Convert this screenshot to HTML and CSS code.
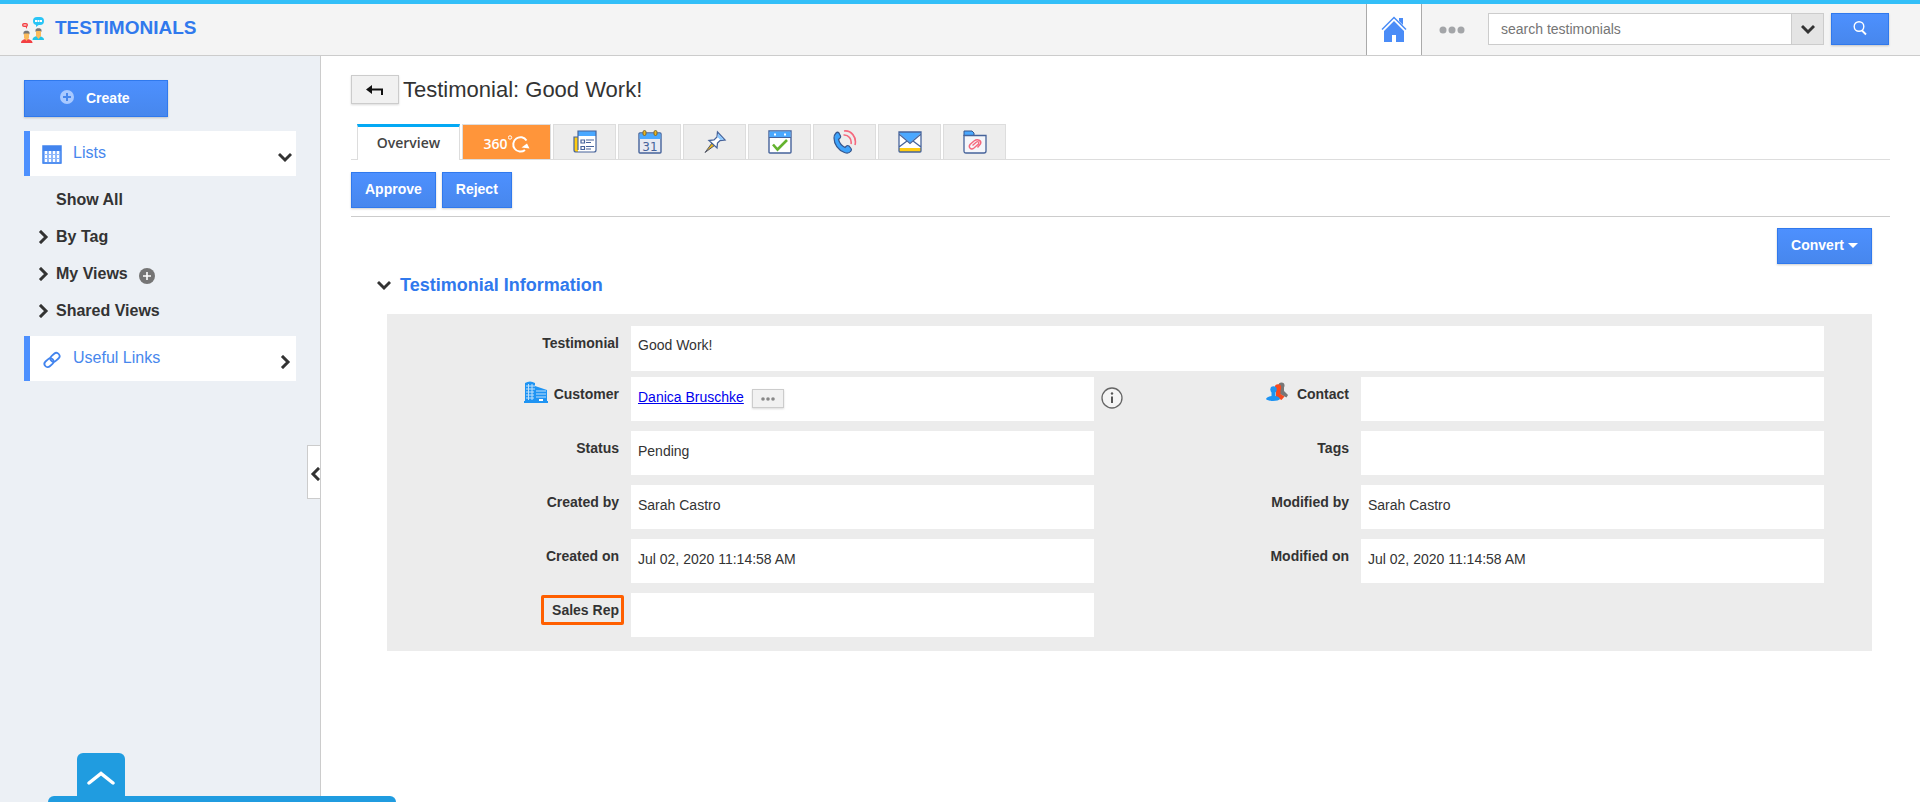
FILE: index.html
```html
<!DOCTYPE html>
<html lang="en">
<head>
<meta charset="utf-8">
<title>Testimonials</title>
<meta name="viewport" content="width=device-width, initial-scale=1">
<link rel="stylesheet" href="styles.css">
</head>
<body>
<svg class="defs" aria-hidden="true">
  <symbol id="chevron" viewBox="0 0 14 14"><path d="M2 5l5 5 5-5" fill="none" stroke="#333" stroke-width="3" stroke-linecap="square"/></symbol>
</svg>

<header class="topbar">
  <div class="brand">
    <svg class="brand-icon" viewBox="0 0 24 28" aria-hidden="true">
      <rect x="12" y="1" width="11" height="8" rx="4" fill="#29c5f6"/>
      <path d="M15 8l0 3 4-3z" fill="#29c5f6"/>
      <path d="M14 5h7" stroke="#fff" stroke-width="2" stroke-dasharray="2 .5"/>
      <rect x="1" y="7" width="6" height="4" rx="2" fill="#f33f43"/>
      <path d="M4 10l2 3v-3z" fill="#f33f43"/>
      <path d="M2.500 9h3" stroke="#fff"/>
      <path d="M11.500 24c0-3 3-4 5.500-4s6 1 6 4z" fill="#22c4e8"/>
      <path d="M15 15h5v5l-2.500 3-2.500-3z" fill="#fbbb5c"/>
      <path d="M14.500 16v-2c0-2.500 6-2.500 6 0v2l-1-1h-4z" fill="#777"/>
      <path d="M0 27c0-3 3-4 5.500-4s6 1 6 4z" fill="#f33f43"/>
      <path d="M3 17h5v5l-2.500 3-2.500-3z" fill="#fbbb5c"/>
      <path d="M2.500 18.500v-2c0-2.500 6-2.500 6 0v2l-1-1h-4z" fill="#777"/>
    </svg>
    <h1 class="brand-name">TESTIMONIALS</h1>
  </div>
  <a class="home" href="#" aria-label="Home">
    <svg class="home-icon" viewBox="0 0 26 26" aria-hidden="true">
      <path d="M1 13.500L13 1.500l12 12" fill="none" stroke="#4a8cf7" stroke-width="1.500"/>
      <path d="M18 2h4v7l-4-4z" fill="#4a8cf7"/>
      <path d="M13 5l10 10v11h-8v-7h-4v7H3V15z" fill="#4a8cf7"/>
    </svg>
  </a>
  <button class="more" type="button" aria-label="More">
    <svg class="more-icon" viewBox="0 0 26 8" aria-hidden="true"><g fill="#a3a5a8"><circle cx="4" cy="4" r="3.500"/><circle cx="13" cy="4" r="3.500"/><circle cx="22" cy="4" r="3.500"/></g></svg>
  </button>
  <form class="search">
    <input class="search-input" type="text" aria-label="Search testimonials" placeholder="search testimonials">
    <button class="search-options" type="button" aria-label="Search options"><svg class="chev" aria-hidden="true"><use href="#chevron"/></svg></button>
    <button class="btn search-go" type="button" aria-label="Search">
      <svg class="glass" viewBox="0 0 16 16" aria-hidden="true"><circle cx="7" cy="6.500" r="4.800" fill="none" stroke="#fff" stroke-width="1.400"/><path d="M10 10.500l4 4" stroke="#fff" stroke-width="1.800"/></svg>
    </button>
  </form>
</header>

<div class="layout">
  <nav class="sidebar">
    <button class="btn create" type="button">
      <svg class="create-icon" viewBox="0 0 14 14" aria-hidden="true"><circle cx="7" cy="7" r="7" fill="#a9c9ff"/><path d="M7 3v8M3 7h8" stroke="#4787ed" stroke-width="2"/></svg>
      Create
    </button>
    <a class="nav-head" href="#">
      <svg class="nav-icon" viewBox="0 0 20 20" aria-hidden="true"><path d="M1 1h18v18H1z" fill="#8fb8fb"/><path d="M1 1h18v5H1z" fill="#4284ee"/><path fill="#fff" d="M3 6h2v3H3zM7 6h2v3H7zM11 6h2v3h-2zM15 6h2v3h-2zM3 10h2v3H3zM7 10h2v3H7zM11 10h2v3h-2zM15 10h2v3h-2zM3 14h2v3H3zM7 14h2v3H7zM11 14h2v3h-2zM15 14h2v3h-2z"/><path d="M1 1h18v17H1z" fill="none" stroke="#4284ee" stroke-width="1.500"/></svg>
      <span class="nav-title">Lists</span>
      <svg class="chev" aria-hidden="true"><use href="#chevron"/></svg>
    </a>
    <ul class="nav-list">
      <li class="nav-item"><span class="nav-gap"></span><a href="#">Show All</a></li>
      <li class="nav-item"><svg class="chev right" aria-hidden="true"><use href="#chevron"/></svg><a href="#">By Tag</a></li>
      <li class="nav-item"><svg class="chev right" aria-hidden="true"><use href="#chevron"/></svg><a href="#">My Views</a>
        <button class="add" type="button" aria-label="Add view"><svg class="add-icon" viewBox="0 0 16 16" aria-hidden="true"><circle cx="8" cy="8" r="8" fill="#757575"/><path d="M8 4v8M4 8h8" stroke="#fff" stroke-width="1.600"/></svg></button></li>
      <li class="nav-item"><svg class="chev right" aria-hidden="true"><use href="#chevron"/></svg><a href="#">Shared Views</a></li>
    </ul>
    <a class="nav-head" href="#">
      <svg class="nav-icon" viewBox="0 0 20 20" aria-hidden="true"><g transform="rotate(-42 10 10)" fill="none" stroke="#4284ee" stroke-width="1.800"><rect x="1" y="6.800" width="10" height="6.400" rx="3.200"/><rect x="9" y="6.800" width="10" height="6.400" rx="3.200"/></g></svg>
      <span class="nav-title">Useful Links</span>
      <svg class="chev right" aria-hidden="true"><use href="#chevron"/></svg>
    </a>
    <button class="collapse" type="button" aria-label="Collapse sidebar"><svg class="chev left" aria-hidden="true"><use href="#chevron"/></svg></button>
  </nav>

  <main class="content">
    <div class="title-row">
      <button class="back" type="button" aria-label="Back"><svg class="back-icon" viewBox="0 0 18 12" aria-hidden="true"><path d="M0 5.500L6 1v9z" fill="#111"/><path d="M4 5.500h12V11" fill="none" stroke="#111" stroke-width="2"/></svg></button>
      <h2 class="title">Testimonial: Good Work!</h2>
    </div>

    <div class="tabs">
      <button class="tab active" type="button">Overview</button>
      <button class="tab full" type="button">360<svg class="turn" viewBox="0 0 22 20" aria-hidden="true"><g fill="none" stroke="#fff"><circle cx="2" cy="3.500" r="1.700"/><path d="M18.500 6.500a7.200 7.200 0 1 0-1.500 9.500" stroke-width="2"/></g><path d="M13.500 13.500l5.500-4 2.500 5z" fill="#fff"/></svg></button>
      <button class="tab" type="button" aria-label="News"><svg class="tab-icon" viewBox="0 0 24 24"><path d="M1 7h5v15H3q-2 0-2-2z" fill="#fc1"/><path d="M5 1h18v19q0 2-2 2H5z" fill="#fff"/><path d="M5 1h18v5H5z" fill="#4aa8ff"/><path d="M5 7H1v13q0 2 2 2h18q2 0 2-2V1H5v19M8 10h3.500v3H8zM8 16.500h3.500v3H8zM13 10h8M13 12.500h5M13 16.500h8M13 19h5" fill="none" stroke="#46639a" stroke-width="1.200"/></svg></button>
      <button class="tab" type="button" aria-label="Calendar"><svg class="tab-icon" viewBox="0 0 24 24"><rect x="1" y="3" width="22" height="20" rx="1" fill="#e8eaf2" stroke="#46639a" stroke-width="1.400"/><path d="M1.500 3.500h21V9h-21z" fill="#4aa8ff"/><rect x="5" y="0.500" width="3" height="5" rx="1.500" fill="#eab41b" stroke="#7d6930"/><rect x="16" y="0.500" width="3" height="5" rx="1.500" fill="#eab41b" stroke="#7d6930"/><text class="day" x="12" y="21">31</text></svg></button>
      <button class="tab" type="button" aria-label="Pin"><svg class="tab-icon" viewBox="0 0 24 24"><path d="M9 13l2.500 2.500L2 22.500z" fill="#eab41b" stroke="#52586b"/><path d="M14.500 2l7.500 8-5 .5-2.500 2.500-.5 5-8-7.500 5-.5 3-3z" fill="#fff" stroke="#46639a" stroke-width="1.300"/><path d="M15 3.500l6 6-3.500.5L14.500 7z" fill="#8cc8ff"/></svg></button>
      <button class="tab" type="button" aria-label="Tasks"><svg class="tab-icon" viewBox="0 0 24 24"><path d="M1 1h22v21q0 1-1 1H2q-1 0-1-1z" fill="#fff" stroke="#46639a" stroke-width="1.400"/><path d="M1.500 1.500h21V7h-21z" fill="#4aa8ff"/><path d="M1 7.500h22" stroke="#46639a"/><path d="M6 4.500h2M16 4.500h2" stroke="#fff" stroke-width="2"/><path d="M5 14.500l4.500 5L19 10" fill="none" stroke="#64b32f" stroke-width="2.600"/></svg></button>
      <button class="tab" type="button" aria-label="Calls"><svg class="tab-icon" viewBox="0 0 24 24"><path d="M3 3q1.500-1.500 3 0l1.500 3q.5 1.500-1 2.500L5.500 9.500q1.500 5.500 6.500 8l1.500-1.500q1-1 2.500 0l2 2.500q1 1.500-.5 3-2 2.500-6 1C5 20 1 14 1 8q0-3 2-5z" fill="#3da3fb" stroke="#36578e" stroke-width="1.200"/><path d="M11 1c7-1 13 6 11 14M10.500 5c5-.5 8.500 4 7.500 9" fill="none" stroke="#f5687d" stroke-width="1.600"/></svg></button>
      <button class="tab" type="button" aria-label="Mail"><svg class="tab-icon" viewBox="0 0 24 24"><path d="M1 2h22v19q0 1-1 1H2q-1 0-1-1z" fill="#fff"/><path d="M1 18h22v4H1z" fill="#fc1"/><path d="M1 2h22v1L12 13 1 3z" fill="#4aa8ff"/><path d="M1 2h22v19q0 1-1 1H2q-1 0-1-1zM1 4l11 9.500L23 4M1 17l8-6M23 17l-8-6" fill="none" stroke="#46639a" stroke-width="1.300"/></svg></button>
      <button class="tab" type="button" aria-label="Files"><svg class="tab-icon" viewBox="0 0 24 24"><path d="M1 6V1h8l2 2v3z" fill="#4aa8ff" stroke="#36578e"/><path d="M1 5.500h22V21q0 2-2 2H3q-2 0-2-2z" fill="#f5f6fa" stroke="#46639a" stroke-width="1.300"/><path d="M9.500 15.500l4-3.500c1.500-1 3 .5 2 2L11 18c-3 2.500-6-.5-4-3.500l4-3.500c3.500-2.500 8-.5 6.500 3l-3 3.500" fill="none" stroke="#f5687d" stroke-width="1.400"/></svg></button>
    </div>

    <div class="actions">
      <button class="btn" type="button">Approve</button>
      <button class="btn" type="button">Reject</button>
    </div>

    <div class="convert-row">
      <button class="btn convert" type="button">Convert <span class="caret"></span></button>
    </div>

    <section class="info">
      <h3 class="section-title"><svg class="chev" aria-hidden="true"><use href="#chevron"/></svg>Testimonial Information</h3>
      <div class="panel">
        <div class="fields first">
          <div class="label">Testimonial</div>
          <div class="value wide">Good Work!</div>
        </div>
        <div class="fields">
          <div class="label">
            <svg class="label-icon" viewBox="0 0 24 22" aria-hidden="true"><path d="M1 2q5-3 10 0v18H1zM11 5l12 4v11H11z" fill="#1f94f3"/><path d="M2 5h9M2 8h9M2 11h8M2 14h8M2 17h8M4.500 3v16M8 3v16M12 10h10M12 13h10M12 16h10" stroke="#bfe0fb"/><path d="M0 21h24" stroke="#1f94f3" stroke-width="2"/><path d="M15 18h4v2h-4z" fill="#fff"/></svg>
            Customer
          </div>
          <div class="value"><a class="link" href="#">Danica Bruschke</a><button class="mini" type="button" aria-label="Customer options"><svg class="mini-icon" viewBox="0 0 14 4" aria-hidden="true"><g fill="#888"><circle cx="2" cy="2" r="1.800"/><circle cx="7" cy="2" r="1.800"/><circle cx="12" cy="2" r="1.800"/></g></svg></button></div>
          <div class="label with-info">
            <svg class="info-icon" viewBox="0 0 22 22" aria-hidden="true"><circle cx="11" cy="11" r="10" fill="#f4f4f4" stroke="#666" stroke-width="1.300"/><path d="M11 9.500V16" stroke="#555" stroke-width="2"/><circle cx="11" cy="6.500" r="1.200" fill="#555"/></svg>
            <svg class="label-icon people" viewBox="0 0 22 20" aria-hidden="true"><circle cx="15.500" cy="3.500" r="3" fill="#777"/><path d="M14 5h4v4l4 4-1.500 2.500L14 12z" fill="#777"/><circle cx="12" cy="5.500" r="3.200" fill="#f8491e"/><path d="M10 7h4.500v5l4 2.500-3 3.500-5.500-3z" fill="#f8491e"/><circle cx="7.500" cy="7.500" r="3.200" fill="#1f94f3"/><path d="M5.500 9h4v5c3 .5 4 1.500 4.500 3-1 2.500-13 2.500-14 0 .5-1.500 2-2.500 5.500-3z" fill="#1f94f3"/></svg>
            Contact
          </div>
          <div class="value"></div>

          <div class="label">Status</div><div class="value">Pending</div>
          <div class="label">Tags</div><div class="value"></div>

          <div class="label">Created by</div><div class="value">Sarah Castro</div>
          <div class="label">Modified by</div><div class="value">Sarah Castro</div>

          <div class="label">Created on</div><div class="value">Jul 02, 2020 11:14:58 AM</div>
          <div class="label">Modified on</div><div class="value">Jul 02, 2020 11:14:58 AM</div>

          <div class="label marked"><span class="mark">Sales Rep</span></div><div class="value"></div>
        </div>
      </div>
    </section>
  </main>
</div>

<div class="dock">
  <button class="dock-tab" type="button" aria-label="Open dock"><svg class="dock-icon" viewBox="0 0 28 14" aria-hidden="true"><path d="M2 12L14 2.500 26 12" fill="none" stroke="#fff" stroke-width="3.500" stroke-linecap="round"/></svg></button>
  <div class="dock-bar"></div>
</div>
</body>
</html>
```
FILE: styles.css
```css
* { box-sizing: border-box; }

body {
  margin: 0;
  min-height: 100vh;
  display: flex;
  flex-direction: column;
  font: 14px/18px "Liberation Sans", Arial, sans-serif;
  color: #333;
  background: #fff;
}

button, input { font: inherit; margin: 0; }
button { cursor: pointer; }
a { color: inherit; text-decoration: none; }
h1, h2, h3 { margin: 0; }
svg { display: block; flex: none; }

.defs { position: absolute; width: 0; height: 0; }

.chev { width: 14px; height: 14px; }
.chev.right { transform: rotate(-90deg); }
.chev.left { transform: rotate(90deg); }

.btn {
  height: 36px;
  padding: 0 13px 2px;
  border: 1px solid #3079ed;
  background: linear-gradient(#4d90fe, #4787ed);
  box-shadow: 0 1px 2px rgba(0, 0, 0, .2);
  color: #fff;
  font-weight: bold;
}

/* Header */
.topbar {
  display: flex;
  align-items: center;
  height: 56px;
  padding-right: 31px;
  border-top: 4px solid #33bff8;
  border-bottom: 1px solid #ccc;
  background: #f4f4f4;
}
.brand { display: flex; flex: 1; align-items: center; gap: 10px; padding-left: 21px; }
.brand-icon { width: 24px; height: 28px; }
.brand-name { font-size: 19px; line-height: 24px; padding-bottom: 4px; color: #3079ed; }
.home {
  align-self: stretch;
  display: flex;
  justify-content: center;
  width: 56px;
  padding-top: 12px;
  border: solid #aaa;
  border-width: 0 1px;
  background: #fff;
}
.home-icon { width: 26px; height: 26px; }
.more { padding: 0 23px 0 17px; border: 0; background: none; }
.more-icon { width: 26px; height: 8px; }
.search { display: flex; padding-bottom: 2px; }
.search-input {
  width: 303px;
  height: 32px;
  padding: 0 12px;
  border: 1px solid #ccc;
  border-right: 0;
  background: #fff;
}
.search-input::placeholder { color: #757575; }
.search-options {
  display: grid;
  place-items: center;
  width: 33px;
  height: 32px;
  padding: 0;
  border: 1px solid #ccc;
  background: #e4e4e4;
}
.search-go { display: grid; place-items: center; width: 58px; height: 32px; margin-left: 7px; padding: 0 0 2px; }
.glass { width: 16px; height: 16px; }

/* Sidebar */
.layout { display: flex; flex: 1; }
.sidebar {
  position: relative;
  flex: none;
  width: 321px;
  padding: 24px 24px 0;
  border-right: 1px solid #ccc;
  background: #ecf0f5;
}
.create { display: flex; align-items: center; gap: 12px; width: 144px; height: 37px; margin-bottom: 14px; padding: 0 0 2px 35px; }
.create-icon { width: 14px; height: 14px; margin-bottom: 2px; }
.nav-head {
  display: flex;
  align-items: center;
  height: 45px;
  padding: 0 4px 0 12px;
  border-left: 6px solid #4d90fe;
  background: #fff;
  color: #4787ed;
}
.nav-icon { width: 20px; height: 20px; margin-top: 2px; }
.nav-title { flex: 1; padding: 0 0 2px 11px; font-size: 16px; }
.nav-head .chev { margin-top: 6px; }
.nav-list { margin: 0; padding: 5px 0 7px; list-style: none; }
.nav-item {
  display: flex;
  align-items: center;
  height: 37px;
  padding-left: 12px;
  font-size: 16px;
  font-weight: bold;
}
.nav-item a { padding-left: 6px; }
.nav-gap { width: 14px; }
.add { margin: 4px 0 0 11px; padding: 0; border: 0; background: none; }
.add-icon { width: 16px; height: 16px; }
.collapse {
  position: absolute;
  top: 389px;
  right: 0;
  display: flex;
  align-items: center;
  width: 13px;
  height: 54px;
  padding: 4px 0 0 1px;
  overflow: hidden;
  border: 1px solid #ccc;
  border-right: 0;
  background: #fff;
}

/* Main */
.content { flex: 1; min-width: 0; padding: 19px 30px 0; }
.title-row { display: flex; align-items: center; gap: 4px; }
.back {
  display: grid;
  place-items: center;
  width: 48px;
  height: 29px;
  padding: 0;
  border: 1px solid #ccc;
  background: #f1f1f1;
  box-shadow: 0 1px 2px rgba(0, 0, 0, .15);
}
.back-icon { width: 18px; height: 12px; }
.title { font-size: 22px; line-height: 29px; font-weight: normal; }

.tabs { display: flex; gap: 2px; margin-top: 20px; padding-left: 6px; border-bottom: 1px solid #ddd; }
.tab {
  display: flex;
  align-items: center;
  justify-content: center;
  width: 63px;
  height: 35px;
  padding: 0;
  border: 1px solid #ddd;
  border-bottom: 0;
  background: #ededed;
}
.tab.active {
  width: 103px;
  height: 36px;
  margin-bottom: -1px;
  padding-bottom: 2px;
  border-top: 3px solid #03a9f4;
  background: #fff;
  color: #444;
  font: 600 14px/18px "Open Sans", sans-serif;
}
.tab.full {
  width: 89px;
  padding-top: 4px;
  background: #ff953a;
  color: #fff;
  font: 600 14px/18px "Open Sans", sans-serif;
}
.turn { width: 22px; height: 20px; }
.tab-icon { width: 24px; height: 24px; }
.day { font: 12px "DejaVu Sans", sans-serif; fill: #46639a; text-anchor: middle; }

.actions { display: flex; gap: 6px; padding: 12px 0 8px; border-bottom: 1px solid #ccc; }
.convert-row { display: flex; justify-content: flex-end; padding: 11px 18px 0 0; }
.convert { display: flex; align-items: center; gap: 4px; }
.caret { border: 5px solid transparent; border-top-color: #fff; border-bottom: 0; }

.info { padding: 9px 18px 0 26px; }
.section-title { display: flex; align-items: center; gap: 9px; font-size: 18px; line-height: 24px; color: #3079ed; }
.panel { margin: 17px 0 0 10px; padding: 12px 48px 14px 0; background: #ececec; }
.fields { display: grid; grid-template-columns: 244px 1fr 267px 1fr; row-gap: 10px; }
.fields.first { margin-bottom: 6px; }
.label { display: flex; justify-content: flex-end; padding: 8px 12px 0 0; font-weight: bold; }
.label-icon { width: 24px; height: 22px; margin: -4px 6px 0 0; }
.label-icon.people { width: 22px; height: 20px; margin: -3px 9px 0 0; }
.info-icon { width: 22px; height: 22px; margin: 2px auto 0 7px; }
.value { display: flex; align-items: flex-start; min-height: 44px; padding: 11px 7px 0; background: #fff; }
.value.wide { grid-column: 2 / -1; min-height: 45px; padding-top: 10px; }
.link { color: #00e; text-decoration: underline; }
.mini {
  display: grid;
  place-items: center;
  width: 32px;
  height: 19px;
  margin: 1px 0 0 8px;
  padding: 0;
  border: 1px solid #ccc;
  background: #f1f1f1;
  box-shadow: 0 1px 2px rgba(0, 0, 0, .15);
}
.mini-icon { width: 14px; height: 4px; }
.label.marked { align-items: flex-start; padding: 2px 7px 0 0; }
.mark { padding: 3px 2px 3px 8px; border: 3px solid #ff5f00; border-radius: 2px; }

/* Dock */
.dock { position: fixed; left: 48px; bottom: 0; width: 348px; }
.dock-tab {
  display: grid;
  place-items: center;
  width: 48px;
  height: 43px;
  margin-left: 29px;
  padding: 6px 0 0;
  border: 0;
  border-radius: 6px 6px 0 0;
  background: #209ce0;
}
.dock-icon { width: 28px; height: 14px; }
.dock-bar { height: 6px; border-radius: 6px 6px 0 0; background: #209ce0; }
```
